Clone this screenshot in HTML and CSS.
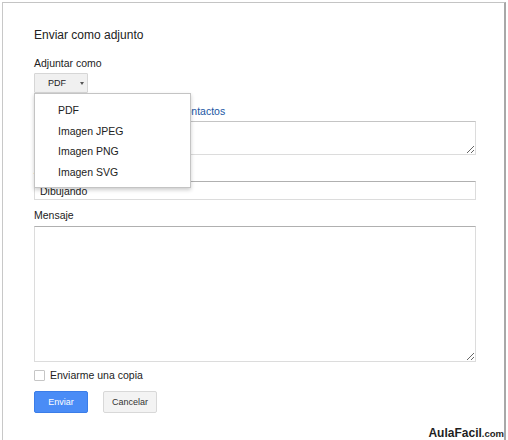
FILE: index.html
```html
<!DOCTYPE html>
<html lang="es">
<head>
<meta charset="utf-8">
<title>Enviar como adjunto</title>
<link rel="stylesheet" href="styles.css">
</head>
<body>
<div class="frame">
  <h1 class="title">Enviar como adjunto</h1>
  <div class="label">Adjuntar como</div>
  <div class="select-wrap">
    <button class="select-btn" type="button"><span>PDF</span><span class="arrow"></span></button>
    <ul class="menu">
      <li>PDF</li>
      <li>Imagen JPEG</li>
      <li>Imagen PNG</li>
      <li>Imagen SVG</li>
    </ul>
  </div>
  <div class="to-row">
    <span class="label-inline">Para</span>
    <a class="link" href="#">Añadir contactos</a>
  </div>
  <textarea class="field to-field"></textarea>
  <div class="label gap-label">Asunto</div>
  <input class="field subject" type="text" value="Dibujando">
  <div class="label gap-label">Mensaje</div>
  <textarea class="field message"></textarea>
  <label class="copy-row"><span class="checkbox"></span><span>Enviarme una copia</span></label>
  <div class="actions">
    <button class="btn primary" type="button">Enviar</button>
    <button class="btn" type="button">Cancelar</button>
  </div>
</div>
<div class="watermark">AulaFacil<span class="dot-com">.com</span></div>
</body>
</html>
```

FILE: styles.css
```css
html, body {
  margin: 0;
  padding: 0;
  background: #fff;
  height: 440px;
  overflow: hidden;
}
body {
  font-family: "Liberation Sans", Arial, sans-serif;
  color: #222;
  position: relative;
}
.frame {
  margin: 2px 0 0 2px;
  width: 504px;
  height: 460px;
  box-sizing: border-box;
  border-top: 1px solid #c4c4c4;
  border-left: 1px solid #c8c8c8;
  border-right: 2px solid #a8a8a8;
  padding: 24px 28px 0 31px;
}
.title {
  margin: 0;
  font-size: 12px;
  font-weight: normal;
  line-height: 16px;
  color: #222;
}
.label {
  font-size: 10.5px;
  line-height: 14px;
  margin-top: 13px;
}
.gap-label {
  margin-top: 8px;
}
.select-wrap {
  position: relative;
  margin-top: 3px;
  width: 54px;
  height: 20px;
}
.select-btn {
  display: flex;
  align-items: center;
  box-sizing: border-box;
  width: 54px;
  height: 20px;
  margin: 0;
  padding: 0 0 0 13px;
  background: #f0f0f0;
  border: 1px solid #d6d6d6;
  border-radius: 1px;
  font-family: "Liberation Sans", Arial, sans-serif;
  font-size: 9px;
  color: #222;
}
.arrow {
  margin-left: 14px;
  width: 0;
  height: 0;
  border-left: 2.5px solid transparent;
  border-right: 2.5px solid transparent;
  border-top: 3px solid #555;
}
.menu {
  position: absolute;
  top: 20px;
  left: 0;
  z-index: 5;
  box-sizing: border-box;
  width: 157px;
  margin: 0;
  padding: 6px 0 5px;
  list-style: none;
  background: #fff;
  border: 1px solid #c4c4c4;
  box-shadow: 0 2px 4px rgba(0, 0, 0, 0.2);
}
.menu li {
  font-size: 10.5px;
  line-height: 20.5px;
  padding-left: 23px;
  color: #222;
}
.to-row {
  display: flex;
  margin-top: 11px;
  font-size: 10.5px;
  line-height: 14px;
}
.label-inline {
  width: 113px;
}
.link {
  color: #1a56a3;
  text-decoration: none;
}
.field {
  display: block;
  box-sizing: border-box;
  width: 442px;
  margin: 0;
  border: 1px solid #dcdcdc;
  border-top-color: #c4c4c4;
  border-radius: 0;
  background: #fff;
  font-family: "Liberation Sans", Arial, sans-serif;
  font-size: 10.5px;
  color: #222;
  outline: none;
}
.to-field {
  margin-top: 3px;
  height: 34px;
  resize: vertical;
}
.subject {
  margin-top: 4px;
  height: 19px;
  padding: 0 5px;
  border-top-color: #b0b0b0;
}
.message {
  margin-top: 4px;
  height: 136px;
  resize: vertical;
  border-top-color: #b0b0b0;
}
.copy-row {
  display: flex;
  align-items: center;
  gap: 5px;
  margin-top: 6px;
  font-size: 10.5px;
  line-height: 14px;
}
.checkbox {
  display: block;
  box-sizing: border-box;
  width: 11px;
  height: 11px;
  border: 1px solid #c6c6c6;
  border-radius: 1px;
  background: #fff;
}
.actions {
  display: flex;
  gap: 15px;
  margin-top: 9px;
}
.btn {
  box-sizing: border-box;
  width: 54px;
  height: 22px;
  margin: 0;
  padding: 0;
  border: 1px solid #d8d8d8;
  border-radius: 2px;
  background: #f3f3f3;
  font-family: "Liberation Sans", Arial, sans-serif;
  font-size: 9px;
  color: #333;
}
.btn.primary {
  background: #4a8cf6;
  border-color: #3b7de8;
  color: #fff;
}
.watermark {
  position: absolute;
  right: 4px;
  bottom: 0;
  padding-left: 3px;
  background: #fff;
  font-size: 12px;
  font-weight: bold;
  line-height: 13px;
  color: #1e1e1e;
}
.dot-com {
  font-size: 9.5px;
}
```
